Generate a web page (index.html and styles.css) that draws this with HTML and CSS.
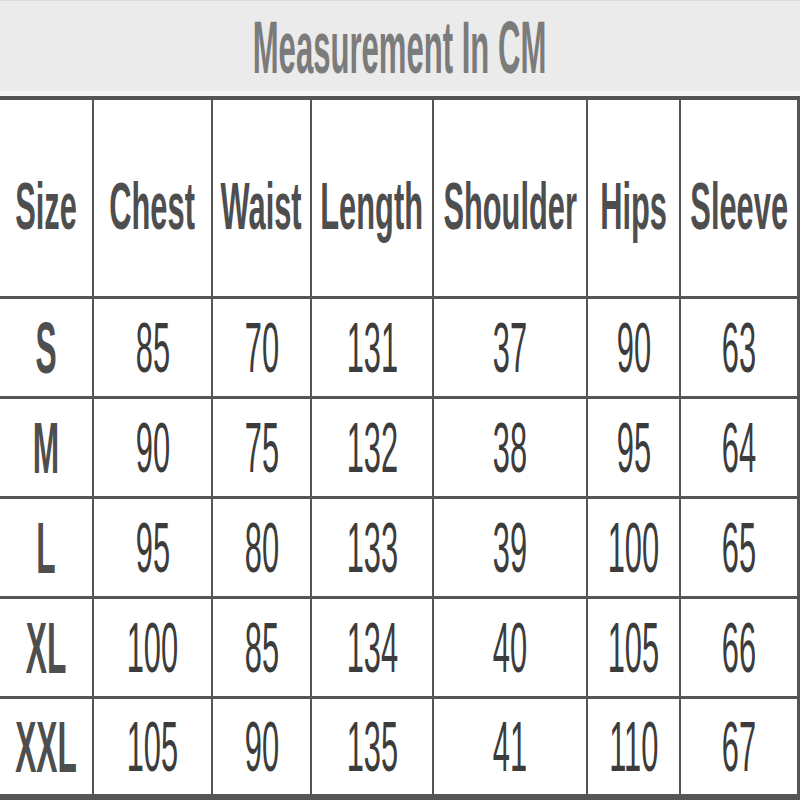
FILE: index.html
```html
<!DOCTYPE html>
<html>
<head>
<meta charset="utf-8">
<link rel="stylesheet" href="styles.css">
</head>
<body>
<div class="chart">
  <div class="title"><span class="squeeze">Measurement In CM</span></div>
  <div class="table">
    <div class="cell head"><span class="squeeze">Size</span></div>
    <div class="cell head"><span class="squeeze">Chest</span></div>
    <div class="cell head"><span class="squeeze">Waist</span></div>
    <div class="cell head"><span class="squeeze">Length</span></div>
    <div class="cell head"><span class="squeeze">Shoulder</span></div>
    <div class="cell head"><span class="squeeze">Hips</span></div>
    <div class="cell head"><span class="squeeze">Sleeve</span></div>

    <div class="cell size"><span class="squeeze">S</span></div>
    <div class="cell"><span class="squeeze">85</span></div>
    <div class="cell"><span class="squeeze">70</span></div>
    <div class="cell"><span class="squeeze">131</span></div>
    <div class="cell"><span class="squeeze">37</span></div>
    <div class="cell"><span class="squeeze">90</span></div>
    <div class="cell"><span class="squeeze">63</span></div>

    <div class="cell size"><span class="squeeze">M</span></div>
    <div class="cell"><span class="squeeze">90</span></div>
    <div class="cell"><span class="squeeze">75</span></div>
    <div class="cell"><span class="squeeze">132</span></div>
    <div class="cell"><span class="squeeze">38</span></div>
    <div class="cell"><span class="squeeze">95</span></div>
    <div class="cell"><span class="squeeze">64</span></div>

    <div class="cell size"><span class="squeeze">L</span></div>
    <div class="cell"><span class="squeeze">95</span></div>
    <div class="cell"><span class="squeeze">80</span></div>
    <div class="cell"><span class="squeeze">133</span></div>
    <div class="cell"><span class="squeeze">39</span></div>
    <div class="cell"><span class="squeeze">100</span></div>
    <div class="cell"><span class="squeeze">65</span></div>

    <div class="cell size"><span class="squeeze">XL</span></div>
    <div class="cell"><span class="squeeze">100</span></div>
    <div class="cell"><span class="squeeze">85</span></div>
    <div class="cell"><span class="squeeze">134</span></div>
    <div class="cell"><span class="squeeze">40</span></div>
    <div class="cell"><span class="squeeze">105</span></div>
    <div class="cell"><span class="squeeze">66</span></div>

    <div class="cell size"><span class="squeeze">XXL</span></div>
    <div class="cell"><span class="squeeze">105</span></div>
    <div class="cell"><span class="squeeze">90</span></div>
    <div class="cell"><span class="squeeze">135</span></div>
    <div class="cell"><span class="squeeze">41</span></div>
    <div class="cell"><span class="squeeze">110</span></div>
    <div class="cell"><span class="squeeze">67</span></div>
  </div>
</div>
</body>
</html>
```

FILE: styles.css
```css
html, body {
  margin: 0;
  padding: 0;
  background: #ffffff;
}

.chart {
  width: 800px;
  height: 800px;
  display: flex;
  flex-direction: column;
  font-family: "Liberation Sans", Arial, sans-serif;
  overflow: hidden;
}

.title {
  height: 90px;
  flex: none;
  background: #ebebeb;
  border-top: 1px solid #dcdcdc;
  border-bottom: 5px solid #f6f6f6;
  display: flex;
  align-items: center;
  justify-content: center;
  font-size: 74px;
  font-weight: bold;
  color: #7b7b7b;
  line-height: 1;
}

.title .squeeze {
  transform: scaleX(0.42);
  padding-top: 4px;
}

.squeeze {
  display: inline-block;
  white-space: nowrap;
  transform-origin: center center;
  transform: scaleX(0.44);
}

.table {
  flex: none;
  display: grid;
  grid-template-columns: 92px 117px 97px 120px 152px 91px 116px;
  grid-template-rows: 196px 97px 97px 97px 97px 95px;
  column-gap: 2px;
  row-gap: 3px;
  background: #555555;
  border-top: 4px solid #555555;
  border-right: 3px solid #555555;
  border-bottom: 7px solid #555555;
}

.cell {
  background: #ffffff;
  display: flex;
  align-items: center;
  justify-content: center;
  font-size: 70px;
  line-height: 1;
  color: #3c3c3c;
}

.cell.head {
  font-size: 67px;
  font-weight: bold;
  color: #4e4e4e;
  padding-top: 14px;
}

.cell.head .squeeze {
  transform: scaleX(0.46);
}

.cell.size {
  font-size: 72px;
  font-weight: bold;
  color: #4e4e4e;
}
```
